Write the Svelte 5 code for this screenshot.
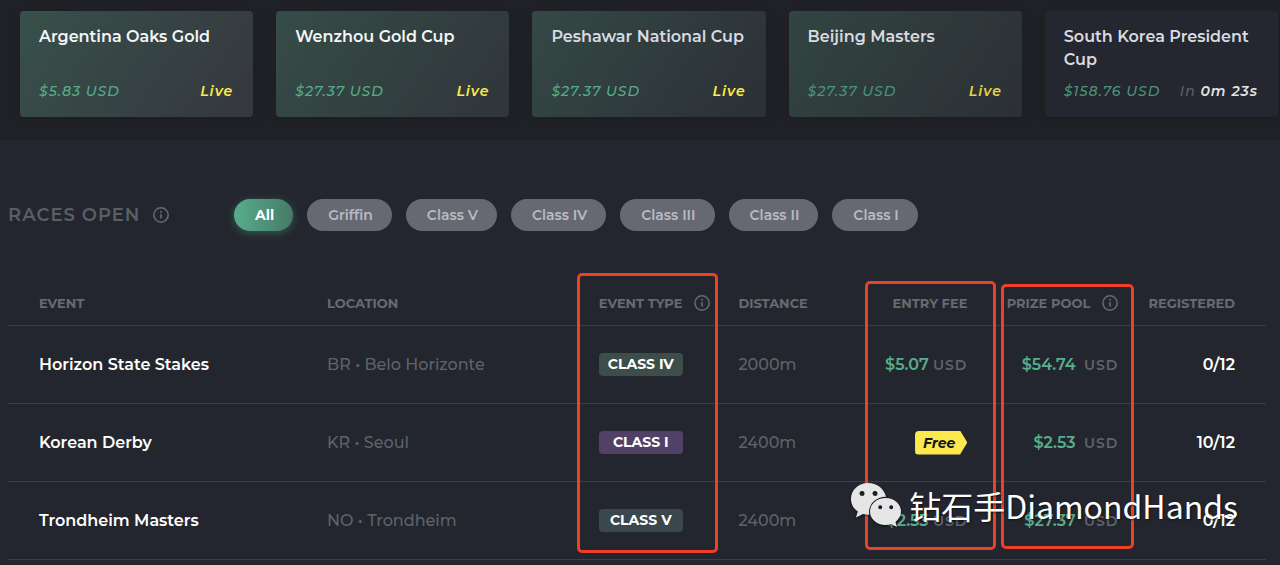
<script lang="ts">
  type Race = {
    name: string;
    location: string;
    type: string;
    color: string;
    distance: string;
    fee: string | null;
    pool: string;
    registered: string;
  };

  const upcoming = [
    { name: 'Argentina Oaks Gold', prize: '$5.83 USD', live: true, tone: 'bright' },
    { name: 'Wenzhou Gold Cup', prize: '$27.37 USD', live: true, tone: 'mid' },
    { name: 'Peshawar National Cup', prize: '$27.37 USD', live: true, tone: 'soft' },
    { name: 'Beijing Masters', prize: '$27.37 USD', live: true, tone: 'dim' },
    { name: 'South Korea President Cup', prize: '$158.76 USD', live: false, tone: 'waiting', startsIn: '0m 23s' }
  ];

  const filters = ['All', 'Griffin', 'Class V', 'Class IV', 'Class III', 'Class II', 'Class I'];
  let selected = $state('All');

  const races: Race[] = [
    { name: 'Horizon State Stakes', location: 'BR • Belo Horizonte', type: 'Class IV', color: 'green', distance: '2000m', fee: '$5.07', pool: '$54.74', registered: '0/12' },
    { name: 'Korean Derby', location: 'KR • Seoul', type: 'Class I', color: 'purple', distance: '2400m', fee: null, pool: '$2.53', registered: '10/12' },
    { name: 'Trondheim Masters', location: 'NO • Trondheim', type: 'Class V', color: 'teal', distance: '2400m', fee: '$2.53', pool: '$27.37', registered: '0/12' }
  ];

  const visible = $derived(selected === 'All' ? races : races.filter((race) => race.type === selected));
</script>

{#snippet info()}
  <svg class="info" viewBox="0 0 16 16" aria-hidden="true">
    <circle cx="8" cy="8" r="7.2" fill="none" stroke="currentColor" stroke-width="1.5" />
    <circle cx="8" cy="4.8" r="1" fill="currentColor" />
    <path d="M8 7v4.6" stroke="currentColor" stroke-width="1.6" />
  </svg>
{/snippet}

<div class="page">
  <section class="upcoming">
    {#each upcoming as race}
      <article class="card {race.tone}">
        <h3>{race.name}</h3>
        <div class="card-footer">
          <span class="prize">{race.prize}</span>
          {#if race.live}
            <span class="live">Live</span>
          {:else}
            <span class="countdown">In <b>{race.startsIn}</b></span>
          {/if}
        </div>
      </article>
    {/each}
  </section>

  <main>
    <header class="toolbar">
      <h2>RACES OPEN {@render info()}</h2>
      <div class="filters">
        {#each filters as filter}
          <button class="pill" class:active={selected === filter} onclick={() => (selected = filter)}>{filter}</button>
        {/each}
      </div>
    </header>

    <div class="table-wrap">
      <table>
        <thead>
          <tr>
            <th class="col-event">EVENT</th>
            <th class="col-location">LOCATION</th>
            <th class="col-type"><span class="label">EVENT TYPE {@render info()}</span></th>
            <th class="col-distance">DISTANCE</th>
            <th class="col-fee">ENTRY FEE</th>
            <th class="col-pool"><span class="label end">PRIZE POOL {@render info()}</span></th>
            <th class="col-registered">REGISTERED</th>
          </tr>
        </thead>
        <tbody>
          {#each visible as race}
            <tr>
              <td class="name">{race.name}</td>
              <td class="muted">{race.location}</td>
              <td><span class="badge {race.color}">{race.type.toUpperCase()}</span></td>
              <td class="muted">{race.distance}</td>
              <td class="money">
                {#if race.fee}
                  <b>{race.fee}</b> <span class="currency">USD</span>
                {:else}
                  <span class="free">Free</span>
                {/if}
              </td>
              <td class="money pool"><b>{race.pool}</b> <span class="currency">USD</span></td>
              <td class="registered">{race.registered}</td>
            </tr>
          {/each}
        </tbody>
      </table>

      <div class="marker marker-type"></div>
      <div class="marker marker-fee"></div>
      <div class="marker marker-pool"></div>
    </div>
  </main>

  <div class="watermark">
    <svg viewBox="0 0 52 46" aria-hidden="true">
      <path
        fill="#e6e6e6"
        fill-rule="evenodd"
        d="M18 1C8.400 1 1 8 1 17c0 5.200 2.600 9.700 6.800 12.500L6 35.500l7-3.600c1.900.6 4 .9 6.300.8C17.500 23.500 25 15 36 14.800 34 6.500 27 1 18 1ZM12 9a2.500 2.500 0 1 1 0 5 2.500 2.500 0 0 1 0-5Zm13 0a2.500 2.500 0 1 1 0 5 2.500 2.500 0 0 1 0-5Z"
      />
      <path
        fill="#e6e6e6"
        fill-rule="evenodd"
        d="M35.500 16C26.800 16 20 22 20 29.500S26.800 43 35.500 43c2 0 3.800-.3 5.500-.9l6 3-1.600-5.200c3.400-2.500 5.600-6.200 5.600-10.400C51 22 44.200 16 35.500 16Zm-5.300 7.200a2 2 0 1 1 0 4 2 2 0 0 1 0-4Zm11 0a2 2 0 1 1 0 4 2 2 0 0 1 0-4Z"
      />
    </svg>
    <span>钻石手DiamondHands</span>
  </div>
</div>

<style>
  :global(body) {
    margin: 0;
    background: #23262e;
  }

  .page {
    position: relative;
    min-height: 100vh;
    overflow: hidden;
    color: #fff;
    font-family: Montserrat, Inter, 'Noto Sans CJK SC', sans-serif;
  }

  .upcoming {
    display: grid;
    grid-template-columns: repeat(5, 1fr);
    gap: 23px;
    padding: 11px 2px 23px 20px;
    background: #202126;
  }

  .card {
    display: flex;
    flex-direction: column;
    justify-content: space-between;
    box-sizing: border-box;
    min-height: 106px;
    padding: 14px 20px 16px 19px;
    border-radius: 4px;
    background: linear-gradient(125deg, #38504a, #35373e);
    box-shadow: 0 3px 8px rgba(0, 0, 0, 0.12);
  }

  .card.mid {
    background: linear-gradient(125deg, #364c47, #30353a);
  }

  .card.soft {
    background: linear-gradient(125deg, #344944, #2c2f37);
  }

  .card.dim {
    background: linear-gradient(125deg, #324542, #2c2f34);
  }

  .card.waiting {
    background: #24272f;
  }

  h3 {
    margin: 0;
    font-size: 16px;
    font-weight: 600;
    line-height: 23px;
    color: #f4f6f7;
  }

  .soft h3,
  .dim h3,
  .waiting h3 {
    color: #d8dbe0;
  }

  .card-footer {
    display: flex;
    justify-content: space-between;
    font-size: 14px;
    font-style: italic;
    font-weight: 500;
    line-height: 20px;
    letter-spacing: 1px;
    white-space: nowrap;
  }

  .prize {
    color: #56ac8a;
  }

  .live {
    color: #fbed45;
    font-weight: 600;
  }

  .dim .prize,
  .waiting .prize {
    color: #4a9378;
  }

  .dim .live {
    color: #e4d541;
  }

  .countdown {
    color: #5d6067;
  }

  .countdown b {
    color: #e2e4e8;
    font-weight: 600;
  }

  main {
    padding: 59px 14px 0 8px;
  }

  .toolbar {
    display: flex;
    align-items: center;
    margin-bottom: 50px;
  }

  h2 {
    display: flex;
    align-items: center;
    gap: 13px;
    width: 226px;
    margin: 0;
    color: #5b5e65;
    font-size: 18px;
    font-weight: 600;
    line-height: 24px;
    letter-spacing: 1px;
  }

  .info {
    flex: none;
    width: 16px;
    height: 16px;
    color: #676a71;
  }

  .filters {
    display: flex;
    gap: 14px;
  }

  .pill {
    height: 32px;
    padding: 0 19px 0 21px;
    border: 0;
    border-radius: 16px;
    background: #666971;
    color: #b7bbc3;
    font-family: inherit;
    font-size: 14px;
    font-weight: 600;
    cursor: pointer;
  }

  .pill.active {
    background: linear-gradient(90deg, #56ae8b, #477a68);
    box-shadow: 0 2px 8px rgba(86, 174, 139, 0.4);
    color: #fff;
    font-weight: 700;
  }

  .table-wrap {
    position: relative;
  }

  table {
    width: 100%;
    table-layout: fixed;
    border-collapse: separate;
    border-spacing: 0;
  }

  th,
  td {
    padding: 0;
    border-bottom: 1px solid #3b3e45;
    text-align: left;
    white-space: nowrap;
  }

  th {
    height: 44px;
    color: #676a71;
    font-size: 13px;
    font-weight: 700;
    line-height: 16px;
  }

  td {
    height: 77px;
    font-size: 16px;
    font-weight: 500;
  }

  th:first-child,
  td:first-child {
    padding-left: 31px;
  }

  th:last-child,
  td:last-child {
    padding-right: 31px;
  }

  th:nth-child(n + 5),
  td:nth-child(n + 5) {
    text-align: right;
  }

  .col-event {
    width: 22.9%;
  }

  .col-location {
    width: 21.6%;
  }

  .col-type {
    width: 11.1%;
  }

  .col-distance {
    width: 7%;
  }

  .col-fee {
    width: 11.2%;
  }

  .col-pool {
    width: 12%;
  }

  .label {
    display: flex;
    align-items: center;
    gap: 12px;
  }

  .label.end {
    justify-content: flex-end;
  }

  .name {
    font-weight: 600;
  }

  .muted {
    color: #5f6269;
  }

  .badge {
    display: block;
    width: 84px;
    border-radius: 4px;
    font-size: 14px;
    font-weight: 700;
    line-height: 23px;
    text-align: center;
  }

  .badge.green {
    background: #3d4d49;
  }

  .badge.purple {
    background: #524167;
  }

  .badge.teal {
    background: #3a474c;
  }

  .money b {
    color: #56ae8b;
    font-weight: 600;
  }

  .pool b {
    margin-right: 4px;
  }

  .currency {
    color: #5f6269;
    font-size: 14px;
    font-weight: 600;
    letter-spacing: 1px;
  }

  .free {
    display: inline-block;
    padding: 0 12px 0 8px;
    border-radius: 4px;
    background: #fbe94f;
    clip-path: polygon(0 0, 86% 0, 100% 50%, 86% 100%, 0 100%);
    color: #17181c;
    font-size: 14px;
    font-style: italic;
    font-weight: 700;
    line-height: 24px;
    vertical-align: middle;
  }

  .registered {
    font-weight: 600;
  }

  /* Frames that call out the three key columns */
  .marker {
    position: absolute;
    box-sizing: border-box;
    border: 3px solid #ee4027;
    border-radius: 5px;
    pointer-events: none;
  }

  .marker-type {
    top: -8px;
    bottom: 7px;
    left: 45.2%;
    width: 11.2%;
  }

  .marker-fee {
    top: 0;
    bottom: 10px;
    left: 68.1%;
    width: 10.4%;
  }

  .marker-pool {
    top: 3px;
    bottom: 11px;
    left: 78.9%;
    width: 10.6%;
  }

  .watermark {
    position: absolute;
    right: 42px;
    bottom: 36px;
    display: flex;
    align-items: center;
    gap: 7px;
    font-family: 'Noto Sans CJK SC', sans-serif;
    font-size: 32px;
    line-height: 48px;
    text-shadow: 1px 1px 2px rgba(0, 0, 0, 0.6);
    pointer-events: none;
  }

  .watermark svg {
    width: 52px;
    height: 46px;
    filter: drop-shadow(0 1px 1px rgba(0, 0, 0, 0.6));
  }
</style>
